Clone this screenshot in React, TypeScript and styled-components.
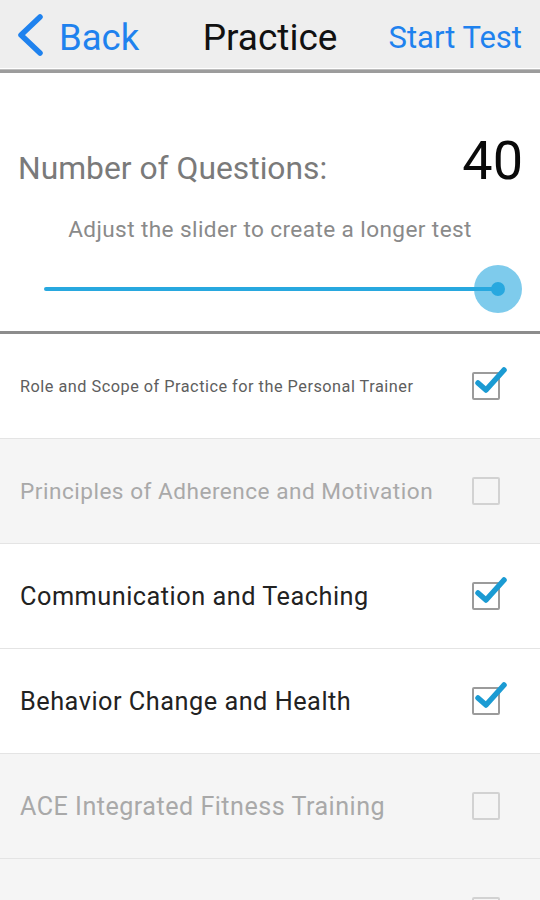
import styled, { createGlobalStyle } from "styled-components";

const GlobalStyle = createGlobalStyle`
  html, body {
    margin: 0;
    padding: 0;
    background: #ffffff;
    font-family: Roboto, "Liberation Sans", sans-serif;
  }
`;

const Screen = styled.div`
  width: 540px;
  height: 900px;
  overflow: hidden;
  background: #ffffff;
`;

const NavBar = styled.header`
  height: 69px;
  background: #eeeeee;
  display: flex;
  align-items: center;
  justify-content: space-between;
  padding: 7px 18px 0 16px;
  box-sizing: border-box;
  border-bottom: 1px solid #ffffff;
  position: relative;
  &::after {
    content: "";
    position: absolute;
    left: 0;
    right: 0;
    bottom: -5px;
    height: 4px;
    background: #9c9c9c;
    border-top: 1px solid #bdbdbd;
    box-sizing: border-box;
  }
`;

const BackButton = styled.div`
  display: flex;
  align-items: center;
  gap: 15px;
  color: #1f82ee;
  font-size: 36.5px;
  width: 150px;
  svg {
    margin-top: -6px;
  }
`;

const NavTitle = styled.div`
  font-size: 37px;
  color: #111111;
  margin-left: 2px;
`;

const NavAction = styled.div`
  font-size: 31px;
  color: #1f82ee;
  width: 150px;
  text-align: right;
`;

const Settings = styled.section`
  padding: 60px 18px 0 18px;
  height: 265px;
  box-sizing: border-box;
  border-bottom: 3px solid #8c8c8c;
`;

const CountRow = styled.div`
  display: flex;
  justify-content: space-between;
  align-items: baseline;
`;

const CountLabel = styled.div`
  font-size: 31.8px;
  color: #7a7a7a;
`;

const CountValue = styled.div`
  font-size: 54px;
  color: #0a0a0a;
  margin-right: -1px;
`;

const Hint = styled.div`
  text-align: center;
  font-size: 22.6px;
  letter-spacing: 0.4px;
  color: #8a8a8a;
  margin-top: 24px;
`;

const SliderTrack = styled.div`
  position: relative;
  height: 4px;
  margin: 44px 24px 0 26px;
  background: #28a8df;
  border-radius: 2px;
`;

const SliderThumb = styled.div`
  position: absolute;
  top: 50%;
  width: 48px;
  height: 48px;
  margin: -24px 0 0 -24px;
  border-radius: 50%;
  background: rgba(40, 168, 223, 0.6);
  display: flex;
  align-items: center;
  justify-content: center;
  &::after {
    content: "";
    width: 14px;
    height: 14px;
    border-radius: 50%;
    background: #28a8df;
  }
`;

const TopicList = styled.ul`
  list-style: none;
  margin: 0;
  padding: 0;
`;

const Topic = styled.li<{ $on: boolean }>`
  height: 104px;
  border-bottom: 1px solid #e4e4e4;
  background: ${(p) => (p.$on ? "#ffffff" : "#f5f5f5")};
  display: flex;
  align-items: center;
  justify-content: space-between;
  padding: 0 40px 0 20px;
`;

// long names are shrunk so they fit next to the checkbox
const TopicName = styled.span<{ $on: boolean; $size: number }>`
  font-size: ${(p) => p.$size}px;
  color: ${(p) => (p.$size < 20 ? "#5e5e5e" : p.$on ? "#222222" : "#a9a9a9")};
  letter-spacing: 0.5px;
`;

const Box = styled.div`
  position: relative;
  width: 24px;
  height: 24px;
  border: 2px solid #d2d2d2;
  border-radius: 2px;
  svg {
    position: absolute;
    left: 1px;
    top: -8px;
  }
`;

const CheckedBox = styled(Box)`
  border-color: #9b9b9b;
`;

function Check({ on }: { on: boolean }) {
  if (!on) return <Box />;
  return (
    <CheckedBox>
      <svg width="34" height="30" viewBox="0 0 34 30">
        <path
          d="M3 17 L11 24 L29 4"
          fill="none"
          stroke="#1b9bd3"
          strokeWidth="5.5"
          strokeLinecap="round"
          strokeLinejoin="round"
        />
      </svg>
    </CheckedBox>
  );
}

const topics = [
  { name: "Role and Scope of Practice for the Personal Trainer", on: true, size: 16.3 },
  { name: "Principles of Adherence and Motivation", on: false, size: 22.6 },
  { name: "Communication and Teaching", on: true, size: 25.3 },
  { name: "Behavior Change and Health", on: true, size: 25.3 },
  { name: "ACE Integrated Fitness Training", on: false, size: 25.1 },
  { name: "", on: false, size: 25 },
];

export default function App() {
  return (
    <Screen>
      <GlobalStyle />
      <NavBar>
        <BackButton>
          <svg width="28" height="42" viewBox="0 0 28 42">
            <path
              d="M24 3 L5 21 L24 39"
              fill="none"
              stroke="#1f82ee"
              strokeWidth="5.5"
              strokeLinecap="round"
              strokeLinejoin="round"
            />
          </svg>
          <span>Back</span>
        </BackButton>
        <NavTitle>Practice</NavTitle>
        <NavAction>Start Test</NavAction>
      </NavBar>
      <Settings>
        <CountRow>
          <CountLabel>Number of Questions:</CountLabel>
          <CountValue>40</CountValue>
        </CountRow>
        <Hint>Adjust the slider to create a longer test</Hint>
        <SliderTrack>
          <SliderThumb style={{ left: "100%" }} />
        </SliderTrack>
      </Settings>
      <TopicList>
        {topics.map((t, i) => (
          <Topic key={i} $on={t.on}>
            <TopicName $on={t.on} $size={t.size}>
              {t.name}
            </TopicName>
            <Check on={t.on} />
          </Topic>
        ))}
      </TopicList>
    </Screen>
  );
}
